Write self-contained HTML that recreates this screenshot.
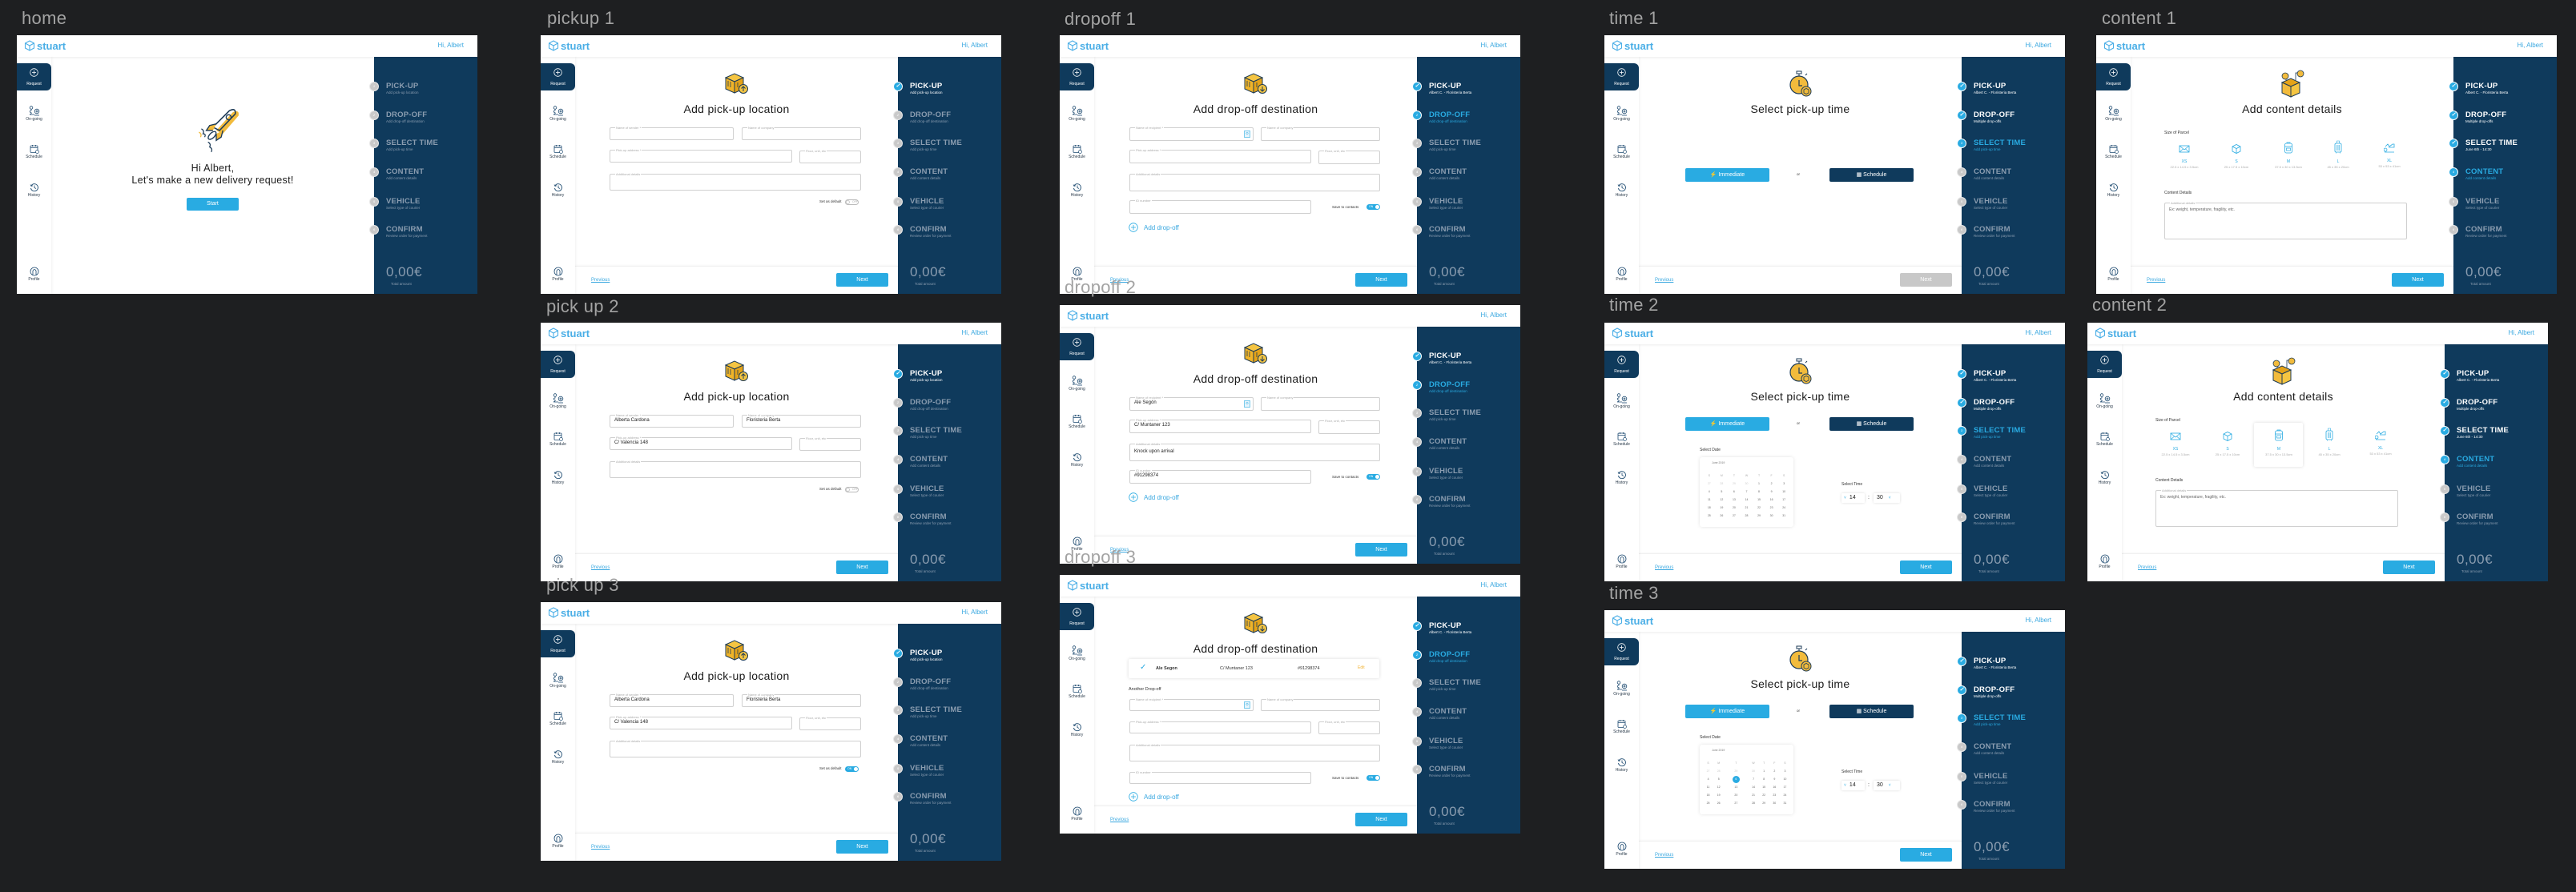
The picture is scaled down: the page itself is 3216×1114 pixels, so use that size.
<!DOCTYPE html>
<html><head><meta charset="utf-8">
<style>
*{margin:0;padding:0;box-sizing:border-box}
body{width:3216px;height:1114px;background:#1e1f21;position:relative;overflow:hidden;font-family:"Liberation Sans",sans-serif}
.lb{position:absolute;font-size:22px;color:#a3a3a3;z-index:5;line-height:22px;letter-spacing:.3px}
.ab{position:absolute;width:575px;height:323px;background:#fff;overflow:hidden}
.hd{position:absolute;left:0;top:0;width:575px;height:27px;background:#fff;box-shadow:0 1px 3px rgba(0,0,0,.08);z-index:2}
.logo{position:absolute;left:9px;top:6px;height:14px;display:flex;align-items:center;color:#4aaee6;font-weight:bold;font-size:13px}
.logo svg{margin-right:2px}
.hi{position:absolute;right:17px;top:8px;font-size:8px;color:#3aa8e0}
.nv{position:absolute;left:0;top:27px;width:43px;height:296px;background:#fff;box-shadow:1px 0 3px rgba(0,0,0,.06);z-index:1}
.rq{position:absolute;left:0;top:35px;width:43px;height:34px;background:#0f3a5c;border-radius:0 6px 6px 0;z-index:2}
.rq p{position:absolute;left:0;width:43px;top:23px;text-align:center;font-size:5px;color:#fff}
.rq svg{position:absolute;left:16px;top:6px}
.ni{position:absolute;left:0;width:43px;text-align:center;z-index:2}
.ni svg{display:block;margin:0 auto}
.ni p{font-size:5px;color:#2a3a4a;margin-top:1px}
.pn{position:absolute;left:446px;top:27px;width:129px;height:296px;background:#0f3a5c;z-index:1}
.s{position:absolute;left:0;width:129px;height:0}
.c{position:absolute;left:-6px;top:-6px;width:12px;height:12px;border-radius:50%;background:#c9c9c9;border:1px solid #e8e8e8;font-size:4px;color:#fff;text-align:center;line-height:10px}
.c.b{background:#29abe2;border-color:#fff}
.c.k{background:#29abe2;border-color:#fff;font-size:7px;font-weight:bold}
.t{position:absolute;left:15px;top:-6px;font-size:9.5px;font-weight:bold;color:#8b9db0;white-space:nowrap;letter-spacing:.2px}
.u{position:absolute;left:15px;top:5px;font-size:4.5px;color:#8b9db0;white-space:nowrap}
.w .t,.w .u{color:#fff}
.bl .t,.bl .u{color:#29abe2}
.tot{position:absolute;left:15px;top:259px;font-size:17px;color:#8b9db0;letter-spacing:.5px}
.ta{position:absolute;left:21px;top:281px;font-size:4.5px;color:#8b9db0}
.ft{position:absolute;left:43px;top:288px;width:403px;height:35px;border-top:1px solid #f0f0f0;box-shadow:0 -1px 2px rgba(0,0,0,.03)}
.pv{position:absolute;left:63px;top:303px;font-size:6px;color:#3aa8e0;text-decoration:underline}
.nx{position:absolute;left:369px;top:297px;width:65px;height:17px;background:#29abe2;border-radius:2px;color:#fff;font-size:7px;text-align:center;line-height:17px}
.nx.d{background:#c8c8c8}
.tt{position:absolute;left:43px;width:403px;text-align:center;font-size:14px;color:#1b1b1b;letter-spacing:.3px}
.ico{position:absolute}
.f{position:absolute;border:1px solid #d0d0d0;border-radius:2px}
.f em{position:absolute;left:6px;top:-3px;font-style:normal;font-size:4px;color:#aaa;background:#fff;padding:0 1px;line-height:5px;white-space:nowrap}
.f span{position:absolute;left:5px;top:3px;font-size:6px;color:#222;white-space:nowrap}
.sm{position:absolute;font-size:5px;color:#333;white-space:nowrap}
.tg{position:absolute;width:17px;height:7px;border-radius:4px;border:1px solid #bbb;background:#fff;font-size:3.5px;color:#aaa;line-height:5px;padding-left:8px}
.tg.on{background:#29abe2;border-color:#29abe2;color:#fff;padding-left:2px}
.tg.on::after{content:"";position:absolute;right:0;top:0;width:5px;height:5px;border-radius:50%;background:#fff}
.tg:not(.on)::after{content:"";position:absolute;left:0;top:0;width:5px;height:5px;border-radius:50%;background:#fff;border:1px solid #ccc;box-sizing:border-box}
.ad{position:absolute;font-size:8px;color:#3aa8e0;white-space:nowrap}
.btn{position:absolute;width:105px;height:17px;border-radius:2px;color:#fff;font-size:7px;line-height:17px;text-align:center}
.cal{position:absolute;left:119px;width:117px;height:87px;background:#fff;box-shadow:0 0 4px rgba(0,0,0,.12);border-radius:3px;font-size:3.5px;color:#777}
.cal table{position:absolute;left:4px;top:18px;width:109px;border-collapse:collapse}
.cal td{text-align:center;height:10px;font-size:3.5px;color:#666}
.cal tr.h td{color:#aaa}
.cal td.o{color:#ccc}
.cal td.sel span{display:inline-block;width:9px;height:9px;border-radius:50%;background:#29abe2;color:#fff;line-height:9px}
.sel2{position:absolute;height:12px;background:#fff;box-shadow:0 0 3px rgba(0,0,0,.15);border-radius:1px;font-size:7px;color:#222;line-height:12px}
.pi{position:absolute;text-align:center;width:50px}
.pi b{display:block;font-weight:normal;font-size:5px;color:#29abe2;margin-top:2px}
.pi i{display:block;font-style:normal;font-size:4px;color:#aaa;margin-top:1px;white-space:nowrap}
</style></head><body>

<div class="lb" style="left:27px;top:12px">home</div>
<div class="lb" style="left:683px;top:12px">pickup 1</div>
<div class="lb" style="left:682px;top:372px">pick up 2</div>
<div class="lb" style="left:682px;top:720px">pick up 3</div>
<div class="lb" style="left:1329px;top:13px">dropoff 1</div>
<div class="lb" style="left:1329px;top:348px">dropoff 2</div>
<div class="lb" style="left:1329px;top:685px">dropoff 3</div>
<div class="lb" style="left:2009px;top:12px">time 1</div>
<div class="lb" style="left:2009px;top:370px">time 2</div>
<div class="lb" style="left:2009px;top:730px">time 3</div>
<div class="lb" style="left:2624px;top:12px">content 1</div>
<div class="lb" style="left:2612px;top:370px">content 2</div>

<!-- HOME -->
<div class="ab" style="left:21px;top:44px">
<div class="hd"><div class="logo"><svg width="14" height="14" viewBox="0 0 14 14"><path d="M7 1L12.5 4V10L7 13L1.5 10V4Z M1.5 4L7 7L12.5 4 M7 7V13" fill="none" stroke="#4aaee6" stroke-width="1.1"/></svg>stuart</div><div class="hi">Hi, Albert</div></div>
<div class="nv"></div>
<div class="rq"><svg width="11" height="11" viewBox="0 0 11 11"><circle cx="5.5" cy="5.5" r="4.8" fill="none" stroke="#fff" stroke-width=".8"/><path d="M5.5 3V8M3 5.5H8" stroke="#fff" stroke-width=".8"/></svg><p>Request</p></div>
<div class="ni" style="top:88px"><svg width="16" height="13" viewBox="0 0 16 13"><circle cx="4" cy="2.5" r="1.8" fill="none" stroke="#1d4a70" stroke-width=".8"/><path d="M4 4.5V6Q1 6.5 3 8.5Q6 9 2 11H8" fill="none" stroke="#1d4a70" stroke-width=".8"/><circle cx="11" cy="7" r="2.8" fill="none" stroke="#1d4a70" stroke-width=".8"/><circle cx="11" cy="7" r="1" fill="none" stroke="#1d4a70" stroke-width=".7"/><path d="M8 12H14" stroke="#1d4a70" stroke-width=".8"/></svg><p>On-going</p></div>
<div class="ni" style="top:136px"><svg width="12" height="12" viewBox="0 0 12 12"><rect x="1" y="2" width="9" height="8.5" rx="1" fill="none" stroke="#1d4a70" stroke-width=".8"/><path d="M1 4.5H10M3.5 1V3M7.5 1V3" stroke="#1d4a70" stroke-width=".8"/><circle cx="9.5" cy="9.5" r="2" fill="#fff" stroke="#1d4a70" stroke-width=".7"/></svg><p>Schedule</p></div>
<div class="ni" style="top:184px"><svg width="12" height="12" viewBox="0 0 12 12"><path d="M2 4A4.5 4.5 0 1 1 1.5 7" fill="none" stroke="#1d4a70" stroke-width=".9"/><path d="M1 2.5L2 4.5L4 3.7M6 3.5V6.5L8 7.5" fill="none" stroke="#1d4a70" stroke-width=".8"/></svg><p>History</p></div>
<div class="ni" style="top:289px"><svg width="12" height="12" viewBox="0 0 12 12"><circle cx="6" cy="6" r="5" fill="none" stroke="#1d4a70" stroke-width=".8"/><path d="M4 10V7.5Q3.5 4 6 3.5Q8.5 4 8 7.5V10" fill="none" stroke="#1d4a70" stroke-width=".8"/></svg><p>Profile</p></div>
<div class="pn">
<div class="s" style="top:37px"><i class="c">1</i><b class="t">PICK-UP</b><span class="u">Add pick-up location</span></div>
<div class="s" style="top:73px"><i class="c">2</i><b class="t">DROP-OFF</b><span class="u">Add drop-off destination</span></div>
<div class="s" style="top:108px"><i class="c">3</i><b class="t">SELECT TIME</b><span class="u">Add pick-up time</span></div>
<div class="s" style="top:144px"><i class="c">4</i><b class="t">CONTENT</b><span class="u">Add content details</span></div>
<div class="s" style="top:181px"><i class="c">5</i><b class="t">VEHICLE</b><span class="u">Select type of courier</span></div>
<div class="s" style="top:216px"><i class="c">6</i><b class="t">CONFIRM</b><span class="u">Review order for payment</span></div>
<div class="tot">0,00€</div><div class="ta">Total amount</div>
</div>
<svg class="ico" style="left:218px;top:88px" width="64" height="64" viewBox="0 0 62 62"><path d="M30 30L50 8Q58 4 57 12L38 34Z" fill="#f2bb3c"/><path d="M26 26L46 6Q54 2 53 10L34 30Z" fill="none" stroke="#1d3b57" stroke-width="1.5"/><circle cx="45" cy="14" r="3" fill="none" stroke="#1d3b57" stroke-width="1.3"/><path d="M30 22L22 24L18 30L26 30M38 30L36 38L30 42L30 34" fill="#f2bb3c" stroke="#1d3b57" stroke-width="1.3"/><ellipse cx="25" cy="36" rx="6" ry="3" transform="rotate(-45 25 36)" fill="none" stroke="#1d3b57" stroke-width="1.3"/><path d="M12 28Q16 30 14 34Q18 34 16 38M20 44Q24 46 22 50Q26 52 24 56" fill="none" stroke="#1d3b57" stroke-width="1.2"/><path d="M9 32Q13 34 11 38" fill="none" stroke="#f2bb3c" stroke-width="1.2"/></svg>
<div class="tt" style="top:159px;font-size:12.5px;line-height:15px">Hi Albert,<br>Let's make a new delivery request!</div>
<div class="nx" style="left:212px;top:203px;width:65px;height:16px;line-height:16px">Start</div>
</div>

<!-- PICKUP 1 -->
<div class="ab" style="left:675px;top:44px">
<div class="hd"><div class="logo"><svg width="14" height="14" viewBox="0 0 14 14"><path d="M7 1L12.5 4V10L7 13L1.5 10V4Z M1.5 4L7 7L12.5 4 M7 7V13" fill="none" stroke="#4aaee6" stroke-width="1.1"/></svg>stuart</div><div class="hi">Hi, Albert</div></div>
<div class="nv"></div>
<div class="rq"><svg width="11" height="11" viewBox="0 0 11 11"><circle cx="5.5" cy="5.5" r="4.8" fill="none" stroke="#fff" stroke-width=".8"/><path d="M5.5 3V8M3 5.5H8" stroke="#fff" stroke-width=".8"/></svg><p>Request</p></div>
<div class="ni" style="top:88px"><svg width="16" height="13" viewBox="0 0 16 13"><circle cx="4" cy="2.5" r="1.8" fill="none" stroke="#1d4a70" stroke-width=".8"/><path d="M4 4.5V6Q1 6.5 3 8.5Q6 9 2 11H8" fill="none" stroke="#1d4a70" stroke-width=".8"/><circle cx="11" cy="7" r="2.8" fill="none" stroke="#1d4a70" stroke-width=".8"/><circle cx="11" cy="7" r="1" fill="none" stroke="#1d4a70" stroke-width=".7"/><path d="M8 12H14" stroke="#1d4a70" stroke-width=".8"/></svg><p>On-going</p></div>
<div class="ni" style="top:136px"><svg width="12" height="12" viewBox="0 0 12 12"><rect x="1" y="2" width="9" height="8.5" rx="1" fill="none" stroke="#1d4a70" stroke-width=".8"/><path d="M1 4.5H10M3.5 1V3M7.5 1V3" stroke="#1d4a70" stroke-width=".8"/><circle cx="9.5" cy="9.5" r="2" fill="#fff" stroke="#1d4a70" stroke-width=".7"/></svg><p>Schedule</p></div>
<div class="ni" style="top:184px"><svg width="12" height="12" viewBox="0 0 12 12"><path d="M2 4A4.5 4.5 0 1 1 1.5 7" fill="none" stroke="#1d4a70" stroke-width=".9"/><path d="M1 2.5L2 4.5L4 3.7M6 3.5V6.5L8 7.5" fill="none" stroke="#1d4a70" stroke-width=".8"/></svg><p>History</p></div>
<div class="ni" style="top:289px"><svg width="12" height="12" viewBox="0 0 12 12"><circle cx="6" cy="6" r="5" fill="none" stroke="#1d4a70" stroke-width=".8"/><path d="M4 10V7.5Q3.5 4 6 3.5Q8.5 4 8 7.5V10" fill="none" stroke="#1d4a70" stroke-width=".8"/></svg><p>Profile</p></div>
<div class="pn">
<div class="s w" style="top:37px"><i class="c k">✓</i><b class="t">PICK-UP</b><span class="u">Add pick-up location</span></div>
<div class="s" style="top:73px"><i class="c">2</i><b class="t">DROP-OFF</b><span class="u">Add drop-off destination</span></div>
<div class="s" style="top:108px"><i class="c">3</i><b class="t">SELECT TIME</b><span class="u">Add pick-up time</span></div>
<div class="s" style="top:144px"><i class="c">4</i><b class="t">CONTENT</b><span class="u">Add content details</span></div>
<div class="s" style="top:181px"><i class="c">5</i><b class="t">VEHICLE</b><span class="u">Select type of courier</span></div>
<div class="s" style="top:216px"><i class="c">6</i><b class="t">CONFIRM</b><span class="u">Review order for payment</span></div>
<div class="tot">0,00€</div><div class="ta">Total amount</div>
</div>
<svg class="ico" style="left:228px;top:45px" width="32" height="30" viewBox="0 0 32 30"><path d="M3 8L14 3L25 8L14 13Z" fill="#f5c542" stroke="#1d3b57" stroke-width="1"/><path d="M3 8L14 13V27L3 22Z" fill="#f0b429" stroke="#1d3b57" stroke-width="1"/><path d="M14 13L25 8V22L14 27Z" fill="#e5a318" stroke="#1d3b57" stroke-width="1"/><path d="M6 12V19M9 13V20M18 14V20" stroke="#1d3b57" stroke-width=".8"/><circle cx="25" cy="22" r="5.5" fill="#f5c542" stroke="#1d3b57" stroke-width="1"/><path d="M25 25V19M22.5 21.5L25 19L27.5 21.5" fill="none" stroke="#1d3b57" stroke-width="1"/></svg>
<div class="tt" style="top:84px">Add pick-up location</div>
<div class="f" style="left:86px;top:115px;width:155px;height:16px"><em>Name of sender *</em></div>
<div class="f" style="left:251px;top:115px;width:149px;height:16px"><em>Name of company</em></div>
<div class="f" style="left:86px;top:143px;width:228px;height:16px"><em>Pick-up address *</em></div>
<div class="f" style="left:323px;top:144px;width:77px;height:16px"><em>Floor, unit, etc</em></div>
<div class="f" style="left:86px;top:173px;width:314px;height:21px"><em>Additional details</em></div>
<div class="sm" style="left:348px;top:205px;font-size:4.5px">Set as default</div><div class="tg" style="left:380px;top:205px">OFF</div>
<div class="ft"></div><div class="pv">Previous</div><div class="nx">Next</div>
</div>

<!-- PICKUP 2 -->
<div class="ab" style="left:675px;top:403px">
<div class="hd"><div class="logo"><svg width="14" height="14" viewBox="0 0 14 14"><path d="M7 1L12.5 4V10L7 13L1.5 10V4Z M1.5 4L7 7L12.5 4 M7 7V13" fill="none" stroke="#4aaee6" stroke-width="1.1"/></svg>stuart</div><div class="hi">Hi, Albert</div></div>
<div class="nv"></div>
<div class="rq"><svg width="11" height="11" viewBox="0 0 11 11"><circle cx="5.5" cy="5.5" r="4.8" fill="none" stroke="#fff" stroke-width=".8"/><path d="M5.5 3V8M3 5.5H8" stroke="#fff" stroke-width=".8"/></svg><p>Request</p></div>
<div class="ni" style="top:88px"><svg width="16" height="13" viewBox="0 0 16 13"><circle cx="4" cy="2.5" r="1.8" fill="none" stroke="#1d4a70" stroke-width=".8"/><path d="M4 4.5V6Q1 6.5 3 8.5Q6 9 2 11H8" fill="none" stroke="#1d4a70" stroke-width=".8"/><circle cx="11" cy="7" r="2.8" fill="none" stroke="#1d4a70" stroke-width=".8"/><circle cx="11" cy="7" r="1" fill="none" stroke="#1d4a70" stroke-width=".7"/><path d="M8 12H14" stroke="#1d4a70" stroke-width=".8"/></svg><p>On-going</p></div>
<div class="ni" style="top:136px"><svg width="12" height="12" viewBox="0 0 12 12"><rect x="1" y="2" width="9" height="8.5" rx="1" fill="none" stroke="#1d4a70" stroke-width=".8"/><path d="M1 4.5H10M3.5 1V3M7.5 1V3" stroke="#1d4a70" stroke-width=".8"/><circle cx="9.5" cy="9.5" r="2" fill="#fff" stroke="#1d4a70" stroke-width=".7"/></svg><p>Schedule</p></div>
<div class="ni" style="top:184px"><svg width="12" height="12" viewBox="0 0 12 12"><path d="M2 4A4.5 4.5 0 1 1 1.5 7" fill="none" stroke="#1d4a70" stroke-width=".9"/><path d="M1 2.5L2 4.5L4 3.7M6 3.5V6.5L8 7.5" fill="none" stroke="#1d4a70" stroke-width=".8"/></svg><p>History</p></div>
<div class="ni" style="top:289px"><svg width="12" height="12" viewBox="0 0 12 12"><circle cx="6" cy="6" r="5" fill="none" stroke="#1d4a70" stroke-width=".8"/><path d="M4 10V7.5Q3.5 4 6 3.5Q8.5 4 8 7.5V10" fill="none" stroke="#1d4a70" stroke-width=".8"/></svg><p>Profile</p></div>
<div class="pn">
<div class="s w" style="top:37px"><i class="c k">✓</i><b class="t">PICK-UP</b><span class="u">Add pick-up location</span></div>
<div class="s" style="top:73px"><i class="c">2</i><b class="t">DROP-OFF</b><span class="u">Add drop-off destination</span></div>
<div class="s" style="top:108px"><i class="c">3</i><b class="t">SELECT TIME</b><span class="u">Add pick-up time</span></div>
<div class="s" style="top:144px"><i class="c">4</i><b class="t">CONTENT</b><span class="u">Add content details</span></div>
<div class="s" style="top:181px"><i class="c">5</i><b class="t">VEHICLE</b><span class="u">Select type of courier</span></div>
<div class="s" style="top:216px"><i class="c">6</i><b class="t">CONFIRM</b><span class="u">Review order for payment</span></div>
<div class="tot">0,00€</div><div class="ta">Total amount</div>
</div>
<svg class="ico" style="left:228px;top:45px" width="32" height="30" viewBox="0 0 32 30"><path d="M3 8L14 3L25 8L14 13Z" fill="#f5c542" stroke="#1d3b57" stroke-width="1"/><path d="M3 8L14 13V27L3 22Z" fill="#f0b429" stroke="#1d3b57" stroke-width="1"/><path d="M14 13L25 8V22L14 27Z" fill="#e5a318" stroke="#1d3b57" stroke-width="1"/><path d="M6 12V19M9 13V20M18 14V20" stroke="#1d3b57" stroke-width=".8"/><circle cx="25" cy="22" r="5.5" fill="#f5c542" stroke="#1d3b57" stroke-width="1"/><path d="M25 25V19M22.5 21.5L25 19L27.5 21.5" fill="none" stroke="#1d3b57" stroke-width="1"/></svg>
<div class="tt" style="top:84px">Add pick-up location</div>
<div class="f" style="left:86px;top:115px;width:155px;height:16px"><em>Name of sender *</em><span>Alberta Cardona</span></div>
<div class="f" style="left:251px;top:115px;width:149px;height:16px"><em>Name of company</em><span>Floristeria Berta</span></div>
<div class="f" style="left:86px;top:143px;width:228px;height:16px"><em>Pick-up address *</em><span>C/ Valencia 148</span></div>
<div class="f" style="left:323px;top:144px;width:77px;height:16px"><em>Floor, unit, etc</em></div>
<div class="f" style="left:86px;top:173px;width:314px;height:21px"><em>Additional details</em></div>
<div class="sm" style="left:348px;top:205px;font-size:4.5px">Set as default</div><div class="tg" style="left:380px;top:205px">OFF</div>
<div class="ft"></div><div class="pv">Previous</div><div class="nx">Next</div>
</div>

<!-- PICKUP 3 -->
<div class="ab" style="left:675px;top:752px">
<div class="hd"><div class="logo"><svg width="14" height="14" viewBox="0 0 14 14"><path d="M7 1L12.5 4V10L7 13L1.5 10V4Z M1.5 4L7 7L12.5 4 M7 7V13" fill="none" stroke="#4aaee6" stroke-width="1.1"/></svg>stuart</div><div class="hi">Hi, Albert</div></div>
<div class="nv"></div>
<div class="rq"><svg width="11" height="11" viewBox="0 0 11 11"><circle cx="5.5" cy="5.5" r="4.8" fill="none" stroke="#fff" stroke-width=".8"/><path d="M5.5 3V8M3 5.5H8" stroke="#fff" stroke-width=".8"/></svg><p>Request</p></div>
<div class="ni" style="top:88px"><svg width="16" height="13" viewBox="0 0 16 13"><circle cx="4" cy="2.5" r="1.8" fill="none" stroke="#1d4a70" stroke-width=".8"/><path d="M4 4.5V6Q1 6.5 3 8.5Q6 9 2 11H8" fill="none" stroke="#1d4a70" stroke-width=".8"/><circle cx="11" cy="7" r="2.8" fill="none" stroke="#1d4a70" stroke-width=".8"/><circle cx="11" cy="7" r="1" fill="none" stroke="#1d4a70" stroke-width=".7"/><path d="M8 12H14" stroke="#1d4a70" stroke-width=".8"/></svg><p>On-going</p></div>
<div class="ni" style="top:136px"><svg width="12" height="12" viewBox="0 0 12 12"><rect x="1" y="2" width="9" height="8.5" rx="1" fill="none" stroke="#1d4a70" stroke-width=".8"/><path d="M1 4.5H10M3.5 1V3M7.5 1V3" stroke="#1d4a70" stroke-width=".8"/><circle cx="9.5" cy="9.5" r="2" fill="#fff" stroke="#1d4a70" stroke-width=".7"/></svg><p>Schedule</p></div>
<div class="ni" style="top:184px"><svg width="12" height="12" viewBox="0 0 12 12"><path d="M2 4A4.5 4.5 0 1 1 1.5 7" fill="none" stroke="#1d4a70" stroke-width=".9"/><path d="M1 2.5L2 4.5L4 3.7M6 3.5V6.5L8 7.5" fill="none" stroke="#1d4a70" stroke-width=".8"/></svg><p>History</p></div>
<div class="ni" style="top:289px"><svg width="12" height="12" viewBox="0 0 12 12"><circle cx="6" cy="6" r="5" fill="none" stroke="#1d4a70" stroke-width=".8"/><path d="M4 10V7.5Q3.5 4 6 3.5Q8.5 4 8 7.5V10" fill="none" stroke="#1d4a70" stroke-width=".8"/></svg><p>Profile</p></div>
<div class="pn">
<div class="s w" style="top:37px"><i class="c k">✓</i><b class="t">PICK-UP</b><span class="u">Add pick-up location</span></div>
<div class="s" style="top:73px"><i class="c">2</i><b class="t">DROP-OFF</b><span class="u">Add drop-off destination</span></div>
<div class="s" style="top:108px"><i class="c">3</i><b class="t">SELECT TIME</b><span class="u">Add pick-up time</span></div>
<div class="s" style="top:144px"><i class="c">4</i><b class="t">CONTENT</b><span class="u">Add content details</span></div>
<div class="s" style="top:181px"><i class="c">5</i><b class="t">VEHICLE</b><span class="u">Select type of courier</span></div>
<div class="s" style="top:216px"><i class="c">6</i><b class="t">CONFIRM</b><span class="u">Review order for payment</span></div>
<div class="tot">0,00€</div><div class="ta">Total amount</div>
</div>
<svg class="ico" style="left:228px;top:45px" width="32" height="30" viewBox="0 0 32 30"><path d="M3 8L14 3L25 8L14 13Z" fill="#f5c542" stroke="#1d3b57" stroke-width="1"/><path d="M3 8L14 13V27L3 22Z" fill="#f0b429" stroke="#1d3b57" stroke-width="1"/><path d="M14 13L25 8V22L14 27Z" fill="#e5a318" stroke="#1d3b57" stroke-width="1"/><path d="M6 12V19M9 13V20M18 14V20" stroke="#1d3b57" stroke-width=".8"/><circle cx="25" cy="22" r="5.5" fill="#f5c542" stroke="#1d3b57" stroke-width="1"/><path d="M25 25V19M22.5 21.5L25 19L27.5 21.5" fill="none" stroke="#1d3b57" stroke-width="1"/></svg>
<div class="tt" style="top:84px">Add pick-up location</div>
<div class="f" style="left:86px;top:115px;width:155px;height:16px"><em>Name of sender *</em><span>Alberta Cardona</span></div>
<div class="f" style="left:251px;top:115px;width:149px;height:16px"><em>Name of company</em><span>Floristeria Berta</span></div>
<div class="f" style="left:86px;top:143px;width:228px;height:16px"><em>Pick-up address *</em><span>C/ Valencia 148</span></div>
<div class="f" style="left:323px;top:144px;width:77px;height:16px"><em>Floor, unit, etc</em></div>
<div class="f" style="left:86px;top:173px;width:314px;height:21px"><em>Additional details</em></div>
<div class="sm" style="left:348px;top:205px;font-size:4.5px">Set as default</div><div class="tg on" style="left:380px;top:205px">ON</div>
<div class="ft"></div><div class="pv">Previous</div><div class="nx">Next</div>
</div>

<!-- DROPOFF 1 -->
<div class="ab" style="left:1323px;top:44px">
<div class="hd"><div class="logo"><svg width="14" height="14" viewBox="0 0 14 14"><path d="M7 1L12.5 4V10L7 13L1.5 10V4Z M1.5 4L7 7L12.5 4 M7 7V13" fill="none" stroke="#4aaee6" stroke-width="1.1"/></svg>stuart</div><div class="hi">Hi, Albert</div></div>
<div class="nv"></div>
<div class="rq"><svg width="11" height="11" viewBox="0 0 11 11"><circle cx="5.5" cy="5.5" r="4.8" fill="none" stroke="#fff" stroke-width=".8"/><path d="M5.5 3V8M3 5.5H8" stroke="#fff" stroke-width=".8"/></svg><p>Request</p></div>
<div class="ni" style="top:88px"><svg width="16" height="13" viewBox="0 0 16 13"><circle cx="4" cy="2.5" r="1.8" fill="none" stroke="#1d4a70" stroke-width=".8"/><path d="M4 4.5V6Q1 6.5 3 8.5Q6 9 2 11H8" fill="none" stroke="#1d4a70" stroke-width=".8"/><circle cx="11" cy="7" r="2.8" fill="none" stroke="#1d4a70" stroke-width=".8"/><circle cx="11" cy="7" r="1" fill="none" stroke="#1d4a70" stroke-width=".7"/><path d="M8 12H14" stroke="#1d4a70" stroke-width=".8"/></svg><p>On-going</p></div>
<div class="ni" style="top:136px"><svg width="12" height="12" viewBox="0 0 12 12"><rect x="1" y="2" width="9" height="8.5" rx="1" fill="none" stroke="#1d4a70" stroke-width=".8"/><path d="M1 4.5H10M3.5 1V3M7.5 1V3" stroke="#1d4a70" stroke-width=".8"/><circle cx="9.5" cy="9.5" r="2" fill="#fff" stroke="#1d4a70" stroke-width=".7"/></svg><p>Schedule</p></div>
<div class="ni" style="top:184px"><svg width="12" height="12" viewBox="0 0 12 12"><path d="M2 4A4.5 4.5 0 1 1 1.5 7" fill="none" stroke="#1d4a70" stroke-width=".9"/><path d="M1 2.5L2 4.5L4 3.7M6 3.5V6.5L8 7.5" fill="none" stroke="#1d4a70" stroke-width=".8"/></svg><p>History</p></div>
<div class="ni" style="top:289px"><svg width="12" height="12" viewBox="0 0 12 12"><circle cx="6" cy="6" r="5" fill="none" stroke="#1d4a70" stroke-width=".8"/><path d="M4 10V7.5Q3.5 4 6 3.5Q8.5 4 8 7.5V10" fill="none" stroke="#1d4a70" stroke-width=".8"/></svg><p>Profile</p></div>
<div class="pn">
<div class="s w" style="top:37px"><i class="c k">✓</i><b class="t">PICK-UP</b><span class="u">Albert C. - Floristeria Berta</span></div>
<div class="s bl" style="top:73px"><i class="c b">2</i><b class="t">DROP-OFF</b><span class="u">Add drop-off destination</span></div>
<div class="s" style="top:108px"><i class="c">3</i><b class="t">SELECT TIME</b><span class="u">Add pick-up time</span></div>
<div class="s" style="top:144px"><i class="c">4</i><b class="t">CONTENT</b><span class="u">Add content details</span></div>
<div class="s" style="top:181px"><i class="c">5</i><b class="t">VEHICLE</b><span class="u">Select type of courier</span></div>
<div class="s" style="top:216px"><i class="c">6</i><b class="t">CONFIRM</b><span class="u">Review order for payment</span></div>
<div class="tot">0,00€</div><div class="ta">Total amount</div>
</div>
<svg class="ico" style="left:228px;top:45px" width="32" height="30" viewBox="0 0 32 30"><path d="M3 8L14 3L25 8L14 13Z" fill="#f5c542" stroke="#1d3b57" stroke-width="1"/><path d="M3 8L14 13V27L3 22Z" fill="#f0b429" stroke="#1d3b57" stroke-width="1"/><path d="M14 13L25 8V22L14 27Z" fill="#e5a318" stroke="#1d3b57" stroke-width="1"/><path d="M6 12V19M9 13V20M18 14V20" stroke="#1d3b57" stroke-width=".8"/><circle cx="25" cy="22" r="5.5" fill="#f5c542" stroke="#1d3b57" stroke-width="1"/><path d="M25 19V25M22.5 22.5L25 25L27.5 22.5" fill="none" stroke="#1d3b57" stroke-width="1"/></svg>
<div class="tt" style="top:84px">Add drop-off destination</div>
<div class="f" style="left:87px;top:115px;width:155px;height:17px"><em>Name of recipient *</em><svg style="position:absolute;right:3px;top:3px" width="8" height="9" viewBox="0 0 8 9"><rect x=".5" y=".5" width="7" height="8" fill="#e6f4fc" stroke="#29abe2" stroke-width=".6"/><circle cx="4" cy="3.5" r="1.2" fill="none" stroke="#29abe2" stroke-width=".5"/></svg></div>
<div class="f" style="left:251px;top:115px;width:149px;height:17px"><em>Name of company</em></div>
<div class="f" style="left:87px;top:143px;width:227px;height:17px"><em>Pick-up address *</em></div>
<div class="f" style="left:323px;top:144px;width:77px;height:17px"><em>Floor, unit, etc</em></div>
<div class="f" style="left:87px;top:173px;width:313px;height:22px"><em>Additional details</em></div>
<div class="f" style="left:87px;top:206px;width:227px;height:17px"><em>ID number</em></div>
<div class="sm" style="left:340px;top:212px;font-size:4.5px">Save to contacts</div><div class="tg on" style="left:383px;top:211px">ON</div>
<svg class="ico" style="left:86px;top:234px" width="12" height="12" viewBox="0 0 12 12"><circle cx="6" cy="6" r="5.3" fill="none" stroke="#29abe2" stroke-width=".8"/><path d="M6 3V9M3 6H9" stroke="#29abe2" stroke-width=".8"/></svg>
<div class="ad" style="left:105px;top:236px">Add drop-off</div>
<div class="ft"></div><div class="pv">Previous</div><div class="nx">Next</div>
</div>

<!-- DROPOFF 2 -->
<div class="ab" style="left:1323px;top:381px">
<div class="hd"><div class="logo"><svg width="14" height="14" viewBox="0 0 14 14"><path d="M7 1L12.5 4V10L7 13L1.5 10V4Z M1.5 4L7 7L12.5 4 M7 7V13" fill="none" stroke="#4aaee6" stroke-width="1.1"/></svg>stuart</div><div class="hi">Hi, Albert</div></div>
<div class="nv"></div>
<div class="rq"><svg width="11" height="11" viewBox="0 0 11 11"><circle cx="5.5" cy="5.5" r="4.8" fill="none" stroke="#fff" stroke-width=".8"/><path d="M5.5 3V8M3 5.5H8" stroke="#fff" stroke-width=".8"/></svg><p>Request</p></div>
<div class="ni" style="top:88px"><svg width="16" height="13" viewBox="0 0 16 13"><circle cx="4" cy="2.5" r="1.8" fill="none" stroke="#1d4a70" stroke-width=".8"/><path d="M4 4.5V6Q1 6.5 3 8.5Q6 9 2 11H8" fill="none" stroke="#1d4a70" stroke-width=".8"/><circle cx="11" cy="7" r="2.8" fill="none" stroke="#1d4a70" stroke-width=".8"/><circle cx="11" cy="7" r="1" fill="none" stroke="#1d4a70" stroke-width=".7"/><path d="M8 12H14" stroke="#1d4a70" stroke-width=".8"/></svg><p>On-going</p></div>
<div class="ni" style="top:136px"><svg width="12" height="12" viewBox="0 0 12 12"><rect x="1" y="2" width="9" height="8.5" rx="1" fill="none" stroke="#1d4a70" stroke-width=".8"/><path d="M1 4.5H10M3.5 1V3M7.5 1V3" stroke="#1d4a70" stroke-width=".8"/><circle cx="9.5" cy="9.5" r="2" fill="#fff" stroke="#1d4a70" stroke-width=".7"/></svg><p>Schedule</p></div>
<div class="ni" style="top:184px"><svg width="12" height="12" viewBox="0 0 12 12"><path d="M2 4A4.5 4.5 0 1 1 1.5 7" fill="none" stroke="#1d4a70" stroke-width=".9"/><path d="M1 2.5L2 4.5L4 3.7M6 3.5V6.5L8 7.5" fill="none" stroke="#1d4a70" stroke-width=".8"/></svg><p>History</p></div>
<div class="ni" style="top:289px"><svg width="12" height="12" viewBox="0 0 12 12"><circle cx="6" cy="6" r="5" fill="none" stroke="#1d4a70" stroke-width=".8"/><path d="M4 10V7.5Q3.5 4 6 3.5Q8.5 4 8 7.5V10" fill="none" stroke="#1d4a70" stroke-width=".8"/></svg><p>Profile</p></div>
<div class="pn">
<div class="s w" style="top:37px"><i class="c k">✓</i><b class="t">PICK-UP</b><span class="u">Albert C. - Floristeria Berta</span></div>
<div class="s bl" style="top:73px"><i class="c b">2</i><b class="t">DROP-OFF</b><span class="u">Add drop-off destination</span></div>
<div class="s" style="top:108px"><i class="c">3</i><b class="t">SELECT TIME</b><span class="u">Add pick-up time</span></div>
<div class="s" style="top:144px"><i class="c">4</i><b class="t">CONTENT</b><span class="u">Add content details</span></div>
<div class="s" style="top:181px"><i class="c">5</i><b class="t">VEHICLE</b><span class="u">Select type of courier</span></div>
<div class="s" style="top:216px"><i class="c">6</i><b class="t">CONFIRM</b><span class="u">Review order for payment</span></div>
<div class="tot">0,00€</div><div class="ta">Total amount</div>
</div>
<svg class="ico" style="left:228px;top:45px" width="32" height="30" viewBox="0 0 32 30"><path d="M3 8L14 3L25 8L14 13Z" fill="#f5c542" stroke="#1d3b57" stroke-width="1"/><path d="M3 8L14 13V27L3 22Z" fill="#f0b429" stroke="#1d3b57" stroke-width="1"/><path d="M14 13L25 8V22L14 27Z" fill="#e5a318" stroke="#1d3b57" stroke-width="1"/><path d="M6 12V19M9 13V20M18 14V20" stroke="#1d3b57" stroke-width=".8"/><circle cx="25" cy="22" r="5.5" fill="#f5c542" stroke="#1d3b57" stroke-width="1"/><path d="M25 19V25M22.5 22.5L25 25L27.5 22.5" fill="none" stroke="#1d3b57" stroke-width="1"/></svg>
<div class="tt" style="top:84px">Add drop-off destination</div>
<div class="f" style="left:87px;top:115px;width:155px;height:17px"><em>Name of recipient *</em><span>Ale Segón</span><svg style="position:absolute;right:3px;top:3px" width="8" height="9" viewBox="0 0 8 9"><rect x=".5" y=".5" width="7" height="8" fill="#e6f4fc" stroke="#29abe2" stroke-width=".6"/><circle cx="4" cy="3.5" r="1.2" fill="none" stroke="#29abe2" stroke-width=".5"/></svg></div>
<div class="f" style="left:251px;top:115px;width:149px;height:17px"><em>Name of company</em></div>
<div class="f" style="left:87px;top:143px;width:227px;height:17px"><em>Pick-up address *</em><span>C/ Muntaner 123</span></div>
<div class="f" style="left:323px;top:144px;width:77px;height:17px"><em>Floor, unit, etc</em></div>
<div class="f" style="left:87px;top:173px;width:313px;height:22px"><em>Additional details</em><span style="top:6px">Knock upon arrival</span></div>
<div class="f" style="left:87px;top:206px;width:227px;height:17px"><em>ID number</em><span>#91298374</span></div>
<div class="sm" style="left:340px;top:212px;font-size:4.5px">Save to contacts</div><div class="tg on" style="left:383px;top:211px">ON</div>
<svg class="ico" style="left:86px;top:234px" width="12" height="12" viewBox="0 0 12 12"><circle cx="6" cy="6" r="5.3" fill="none" stroke="#29abe2" stroke-width=".8"/><path d="M6 3V9M3 6H9" stroke="#29abe2" stroke-width=".8"/></svg>
<div class="ad" style="left:105px;top:236px">Add drop-off</div>
<div class="ft"></div><div class="pv">Previous</div><div class="nx">Next</div>
</div>

<!-- DROPOFF 3 -->
<div class="ab" style="left:1323px;top:718px">
<div class="hd"><div class="logo"><svg width="14" height="14" viewBox="0 0 14 14"><path d="M7 1L12.5 4V10L7 13L1.5 10V4Z M1.5 4L7 7L12.5 4 M7 7V13" fill="none" stroke="#4aaee6" stroke-width="1.1"/></svg>stuart</div><div class="hi">Hi, Albert</div></div>
<div class="nv"></div>
<div class="rq"><svg width="11" height="11" viewBox="0 0 11 11"><circle cx="5.5" cy="5.5" r="4.8" fill="none" stroke="#fff" stroke-width=".8"/><path d="M5.5 3V8M3 5.5H8" stroke="#fff" stroke-width=".8"/></svg><p>Request</p></div>
<div class="ni" style="top:88px"><svg width="16" height="13" viewBox="0 0 16 13"><circle cx="4" cy="2.5" r="1.8" fill="none" stroke="#1d4a70" stroke-width=".8"/><path d="M4 4.5V6Q1 6.5 3 8.5Q6 9 2 11H8" fill="none" stroke="#1d4a70" stroke-width=".8"/><circle cx="11" cy="7" r="2.8" fill="none" stroke="#1d4a70" stroke-width=".8"/><circle cx="11" cy="7" r="1" fill="none" stroke="#1d4a70" stroke-width=".7"/><path d="M8 12H14" stroke="#1d4a70" stroke-width=".8"/></svg><p>On-going</p></div>
<div class="ni" style="top:136px"><svg width="12" height="12" viewBox="0 0 12 12"><rect x="1" y="2" width="9" height="8.5" rx="1" fill="none" stroke="#1d4a70" stroke-width=".8"/><path d="M1 4.5H10M3.5 1V3M7.5 1V3" stroke="#1d4a70" stroke-width=".8"/><circle cx="9.5" cy="9.5" r="2" fill="#fff" stroke="#1d4a70" stroke-width=".7"/></svg><p>Schedule</p></div>
<div class="ni" style="top:184px"><svg width="12" height="12" viewBox="0 0 12 12"><path d="M2 4A4.5 4.5 0 1 1 1.5 7" fill="none" stroke="#1d4a70" stroke-width=".9"/><path d="M1 2.5L2 4.5L4 3.7M6 3.5V6.5L8 7.5" fill="none" stroke="#1d4a70" stroke-width=".8"/></svg><p>History</p></div>
<div class="ni" style="top:289px"><svg width="12" height="12" viewBox="0 0 12 12"><circle cx="6" cy="6" r="5" fill="none" stroke="#1d4a70" stroke-width=".8"/><path d="M4 10V7.5Q3.5 4 6 3.5Q8.5 4 8 7.5V10" fill="none" stroke="#1d4a70" stroke-width=".8"/></svg><p>Profile</p></div>
<div class="pn">
<div class="s w" style="top:37px"><i class="c k">✓</i><b class="t">PICK-UP</b><span class="u">Albert C. - Floristeria Berta</span></div>
<div class="s bl" style="top:73px"><i class="c b">2</i><b class="t">DROP-OFF</b><span class="u">Add drop-off destination</span></div>
<div class="s" style="top:108px"><i class="c">3</i><b class="t">SELECT TIME</b><span class="u">Add pick-up time</span></div>
<div class="s" style="top:144px"><i class="c">4</i><b class="t">CONTENT</b><span class="u">Add content details</span></div>
<div class="s" style="top:181px"><i class="c">5</i><b class="t">VEHICLE</b><span class="u">Select type of courier</span></div>
<div class="s" style="top:216px"><i class="c">6</i><b class="t">CONFIRM</b><span class="u">Review order for payment</span></div>
<div class="tot">0,00€</div><div class="ta">Total amount</div>
</div>
<svg class="ico" style="left:228px;top:45px" width="32" height="30" viewBox="0 0 32 30"><path d="M3 8L14 3L25 8L14 13Z" fill="#f5c542" stroke="#1d3b57" stroke-width="1"/><path d="M3 8L14 13V27L3 22Z" fill="#f0b429" stroke="#1d3b57" stroke-width="1"/><path d="M14 13L25 8V22L14 27Z" fill="#e5a318" stroke="#1d3b57" stroke-width="1"/><path d="M6 12V19M9 13V20M18 14V20" stroke="#1d3b57" stroke-width=".8"/><circle cx="25" cy="22" r="5.5" fill="#f5c542" stroke="#1d3b57" stroke-width="1"/><path d="M25 19V25M22.5 22.5L25 25L27.5 22.5" fill="none" stroke="#1d3b57" stroke-width="1"/></svg>
<div class="tt" style="top:84px">Add drop-off destination</div>
<div style="position:absolute;left:86px;top:105px;width:313px;height:24px;background:#fff;box-shadow:0 0 4px rgba(0,0,0,.15);border-radius:2px">
<span style="position:absolute;left:14px;top:5px;color:#29abe2;font-size:10px">✓</span>
<span class="sm" style="left:34px;top:9px;font-size:5.5px;font-weight:bold">Ale Segon</span>
<span class="sm" style="left:114px;top:9px;font-size:5.5px">C/ Muntaner 123</span>
<span class="sm" style="left:211px;top:9px;font-size:5.5px">#91298374</span>
<span class="sm" style="left:286px;top:8px;font-size:5px;color:#f2b233">Edit</span></div>
<div class="sm" style="left:86px;top:140px;font-size:5.5px">Another Drop-off</div>
<div class="f" style="left:87px;top:155px;width:155px;height:15px"><em>Name of recipient *</em><svg style="position:absolute;right:3px;top:2px" width="8" height="9" viewBox="0 0 8 9"><rect x=".5" y=".5" width="7" height="8" fill="#e6f4fc" stroke="#29abe2" stroke-width=".6"/><circle cx="4" cy="3.5" r="1.2" fill="none" stroke="#29abe2" stroke-width=".5"/></svg></div>
<div class="f" style="left:251px;top:155px;width:149px;height:15px"><em>Name of company</em></div>
<div class="f" style="left:87px;top:183px;width:227px;height:15px"><em>Pick-up address *</em></div>
<div class="f" style="left:323px;top:183px;width:77px;height:16px"><em>Floor, unit, etc</em></div>
<div class="f" style="left:87px;top:212px;width:313px;height:21px"><em>Additional details</em></div>
<div class="f" style="left:87px;top:246px;width:227px;height:15px"><em>ID number</em></div>
<div class="sm" style="left:340px;top:251px;font-size:4.5px">Save to contacts</div><div class="tg on" style="left:383px;top:250px">ON</div>
<svg class="ico" style="left:86px;top:271px" width="12" height="12" viewBox="0 0 12 12"><circle cx="6" cy="6" r="5.3" fill="none" stroke="#29abe2" stroke-width=".8"/><path d="M6 3V9M3 6H9" stroke="#29abe2" stroke-width=".8"/></svg>
<div class="ad" style="left:105px;top:273px">Add drop-off</div>
<div class="ft"></div><div class="pv">Previous</div><div class="nx">Next</div>
</div>

<!-- TIME 1 -->
<div class="ab" style="left:2003px;top:44px">
<div class="hd"><div class="logo"><svg width="14" height="14" viewBox="0 0 14 14"><path d="M7 1L12.5 4V10L7 13L1.5 10V4Z M1.5 4L7 7L12.5 4 M7 7V13" fill="none" stroke="#4aaee6" stroke-width="1.1"/></svg>stuart</div><div class="hi">Hi, Albert</div></div>
<div class="nv"></div>
<div class="rq"><svg width="11" height="11" viewBox="0 0 11 11"><circle cx="5.5" cy="5.5" r="4.8" fill="none" stroke="#fff" stroke-width=".8"/><path d="M5.5 3V8M3 5.5H8" stroke="#fff" stroke-width=".8"/></svg><p>Request</p></div>
<div class="ni" style="top:88px"><svg width="16" height="13" viewBox="0 0 16 13"><circle cx="4" cy="2.5" r="1.8" fill="none" stroke="#1d4a70" stroke-width=".8"/><path d="M4 4.5V6Q1 6.5 3 8.5Q6 9 2 11H8" fill="none" stroke="#1d4a70" stroke-width=".8"/><circle cx="11" cy="7" r="2.8" fill="none" stroke="#1d4a70" stroke-width=".8"/><circle cx="11" cy="7" r="1" fill="none" stroke="#1d4a70" stroke-width=".7"/><path d="M8 12H14" stroke="#1d4a70" stroke-width=".8"/></svg><p>On-going</p></div>
<div class="ni" style="top:136px"><svg width="12" height="12" viewBox="0 0 12 12"><rect x="1" y="2" width="9" height="8.5" rx="1" fill="none" stroke="#1d4a70" stroke-width=".8"/><path d="M1 4.5H10M3.5 1V3M7.5 1V3" stroke="#1d4a70" stroke-width=".8"/><circle cx="9.5" cy="9.5" r="2" fill="#fff" stroke="#1d4a70" stroke-width=".7"/></svg><p>Schedule</p></div>
<div class="ni" style="top:184px"><svg width="12" height="12" viewBox="0 0 12 12"><path d="M2 4A4.5 4.5 0 1 1 1.5 7" fill="none" stroke="#1d4a70" stroke-width=".9"/><path d="M1 2.5L2 4.5L4 3.7M6 3.5V6.5L8 7.5" fill="none" stroke="#1d4a70" stroke-width=".8"/></svg><p>History</p></div>
<div class="ni" style="top:289px"><svg width="12" height="12" viewBox="0 0 12 12"><circle cx="6" cy="6" r="5" fill="none" stroke="#1d4a70" stroke-width=".8"/><path d="M4 10V7.5Q3.5 4 6 3.5Q8.5 4 8 7.5V10" fill="none" stroke="#1d4a70" stroke-width=".8"/></svg><p>Profile</p></div>
<div class="pn">
<div class="s w" style="top:37px"><i class="c k">✓</i><b class="t">PICK-UP</b><span class="u">Albert C. - Floristeria Berta</span></div>
<div class="s w" style="top:73px"><i class="c k">✓</i><b class="t">DROP-OFF</b><span class="u">Multiple drop-offs</span></div>
<div class="s bl" style="top:108px"><i class="c b">3</i><b class="t">SELECT TIME</b><span class="u">Add pick-up time</span></div>
<div class="s" style="top:144px"><i class="c">4</i><b class="t">CONTENT</b><span class="u">Add content details</span></div>
<div class="s" style="top:181px"><i class="c">5</i><b class="t">VEHICLE</b><span class="u">Select type of courier</span></div>
<div class="s" style="top:216px"><i class="c">6</i><b class="t">CONFIRM</b><span class="u">Review order for payment</span></div>
<div class="tot">0,00€</div><div class="ta">Total amount</div>
</div>
<svg class="ico" style="left:230px;top:44px" width="30" height="34" viewBox="0 0 30 34"><rect x="10" y="1" width="6" height="3" fill="none" stroke="#1d3b57"/><path d="M13 4V7M21 6L23 4" stroke="#1d3b57"/><circle cx="13" cy="18" r="11" fill="#f2bb3c" stroke="#1d3b57" stroke-width="1.2"/><path d="M13 12V19H17" fill="none" stroke="#1d3b57" stroke-width="1.2"/><circle cx="22" cy="26" r="6" fill="#f2bb3c" stroke="#1d3b57"/><path d="M19 24L22 22.5L25 24V28L22 29.5L19 28Z" fill="none" stroke="#1d3b57" stroke-width=".8"/></svg>
<div class="tt" style="top:84px">Select pick-up time</div>
<div class="btn" style="left:101px;top:166px;background:#29abe2">⚡ Immediate</div>
<div class="sm" style="left:240px;top:171px;font-size:4.5px">or</div>
<div class="btn" style="left:281px;top:166px;background:#0f3a5c">▦ Schedule</div>
<div class="ft"></div><div class="pv">Previous</div><div class="nx d">Next</div>
</div>

<!-- TIME 2 -->
<div class="ab" style="left:2003px;top:403px">
<div class="hd"><div class="logo"><svg width="14" height="14" viewBox="0 0 14 14"><path d="M7 1L12.5 4V10L7 13L1.5 10V4Z M1.5 4L7 7L12.5 4 M7 7V13" fill="none" stroke="#4aaee6" stroke-width="1.1"/></svg>stuart</div><div class="hi">Hi, Albert</div></div>
<div class="nv"></div>
<div class="rq"><svg width="11" height="11" viewBox="0 0 11 11"><circle cx="5.5" cy="5.5" r="4.8" fill="none" stroke="#fff" stroke-width=".8"/><path d="M5.5 3V8M3 5.5H8" stroke="#fff" stroke-width=".8"/></svg><p>Request</p></div>
<div class="ni" style="top:88px"><svg width="16" height="13" viewBox="0 0 16 13"><circle cx="4" cy="2.5" r="1.8" fill="none" stroke="#1d4a70" stroke-width=".8"/><path d="M4 4.5V6Q1 6.5 3 8.5Q6 9 2 11H8" fill="none" stroke="#1d4a70" stroke-width=".8"/><circle cx="11" cy="7" r="2.8" fill="none" stroke="#1d4a70" stroke-width=".8"/><circle cx="11" cy="7" r="1" fill="none" stroke="#1d4a70" stroke-width=".7"/><path d="M8 12H14" stroke="#1d4a70" stroke-width=".8"/></svg><p>On-going</p></div>
<div class="ni" style="top:136px"><svg width="12" height="12" viewBox="0 0 12 12"><rect x="1" y="2" width="9" height="8.5" rx="1" fill="none" stroke="#1d4a70" stroke-width=".8"/><path d="M1 4.5H10M3.5 1V3M7.5 1V3" stroke="#1d4a70" stroke-width=".8"/><circle cx="9.5" cy="9.5" r="2" fill="#fff" stroke="#1d4a70" stroke-width=".7"/></svg><p>Schedule</p></div>
<div class="ni" style="top:184px"><svg width="12" height="12" viewBox="0 0 12 12"><path d="M2 4A4.5 4.5 0 1 1 1.5 7" fill="none" stroke="#1d4a70" stroke-width=".9"/><path d="M1 2.5L2 4.5L4 3.7M6 3.5V6.5L8 7.5" fill="none" stroke="#1d4a70" stroke-width=".8"/></svg><p>History</p></div>
<div class="ni" style="top:289px"><svg width="12" height="12" viewBox="0 0 12 12"><circle cx="6" cy="6" r="5" fill="none" stroke="#1d4a70" stroke-width=".8"/><path d="M4 10V7.5Q3.5 4 6 3.5Q8.5 4 8 7.5V10" fill="none" stroke="#1d4a70" stroke-width=".8"/></svg><p>Profile</p></div>
<div class="pn">
<div class="s w" style="top:37px"><i class="c k">✓</i><b class="t">PICK-UP</b><span class="u">Albert C. - Floristeria Berta</span></div>
<div class="s w" style="top:73px"><i class="c k">✓</i><b class="t">DROP-OFF</b><span class="u">Multiple drop-offs</span></div>
<div class="s bl" style="top:108px"><i class="c b">3</i><b class="t">SELECT TIME</b><span class="u">Add pick-up time</span></div>
<div class="s" style="top:144px"><i class="c">4</i><b class="t">CONTENT</b><span class="u">Add content details</span></div>
<div class="s" style="top:181px"><i class="c">5</i><b class="t">VEHICLE</b><span class="u">Select type of courier</span></div>
<div class="s" style="top:216px"><i class="c">6</i><b class="t">CONFIRM</b><span class="u">Review order for payment</span></div>
<div class="tot">0,00€</div><div class="ta">Total amount</div>
</div>
<svg class="ico" style="left:230px;top:44px" width="30" height="34" viewBox="0 0 30 34"><rect x="10" y="1" width="6" height="3" fill="none" stroke="#1d3b57"/><path d="M13 4V7M21 6L23 4" stroke="#1d3b57"/><circle cx="13" cy="18" r="11" fill="#f2bb3c" stroke="#1d3b57" stroke-width="1.2"/><path d="M13 12V19H17" fill="none" stroke="#1d3b57" stroke-width="1.2"/><circle cx="22" cy="26" r="6" fill="#f2bb3c" stroke="#1d3b57"/><path d="M19 24L22 22.5L25 24V28L22 29.5L19 28Z" fill="none" stroke="#1d3b57" stroke-width=".8"/></svg>
<div class="tt" style="top:84px">Select pick-up time</div>
<div class="btn" style="left:101px;top:118px;background:#29abe2">⚡ Immediate</div>
<div class="sm" style="left:240px;top:123px;font-size:4.5px">or</div>
<div class="btn" style="left:281px;top:118px;background:#0f3a5c">▦ Schedule</div>
<div class="sm" style="left:119px;top:156px">Select Date</div>
<div class="cal" style="top:168px"><div style="position:absolute;left:15px;top:5px;font-size:3.5px">June 2019</div>
<table><tr class="h"><td>S</td><td>M</td><td>T</td><td>W</td><td>T</td><td>F</td><td>S</td></tr>
<tr><td class="o">27</td><td class="o">28</td><td class="o">29</td><td class="o">30</td><td>1</td><td>2</td><td>3</td></tr>
<tr><td>4</td><td>5</td><td>6</td><td>7</td><td>8</td><td>9</td><td>10</td></tr>
<tr><td>11</td><td>12</td><td>13</td><td>14</td><td>15</td><td>16</td><td>17</td></tr>
<tr><td>18</td><td>19</td><td>20</td><td>21</td><td>22</td><td>23</td><td>24</td></tr>
<tr><td>25</td><td>26</td><td>27</td><td>28</td><td>29</td><td>30</td><td>31</td></tr></table></div>
<div class="sm" style="left:296px;top:199px">Select Time</div>
<div class="sel2" style="left:296px;top:213px;width:29px"><span style="color:#29abe2;font-size:5px;margin:0 4px 0 3px">˅</span>14</div>
<div class="sm" style="left:329px;top:215px;font-size:7px">:</div>
<div class="sel2" style="left:336px;top:213px;width:33px;padding-left:4px">30<span style="color:#29abe2;font-size:5px;margin-left:7px">˅</span></div>
<div class="ft"></div><div class="pv">Previous</div><div class="nx">Next</div>
</div>

<!-- TIME 3 -->
<div class="ab" style="left:2003px;top:762px">
<div class="hd"><div class="logo"><svg width="14" height="14" viewBox="0 0 14 14"><path d="M7 1L12.5 4V10L7 13L1.5 10V4Z M1.5 4L7 7L12.5 4 M7 7V13" fill="none" stroke="#4aaee6" stroke-width="1.1"/></svg>stuart</div><div class="hi">Hi, Albert</div></div>
<div class="nv"></div>
<div class="rq"><svg width="11" height="11" viewBox="0 0 11 11"><circle cx="5.5" cy="5.5" r="4.8" fill="none" stroke="#fff" stroke-width=".8"/><path d="M5.5 3V8M3 5.5H8" stroke="#fff" stroke-width=".8"/></svg><p>Request</p></div>
<div class="ni" style="top:88px"><svg width="16" height="13" viewBox="0 0 16 13"><circle cx="4" cy="2.5" r="1.8" fill="none" stroke="#1d4a70" stroke-width=".8"/><path d="M4 4.5V6Q1 6.5 3 8.5Q6 9 2 11H8" fill="none" stroke="#1d4a70" stroke-width=".8"/><circle cx="11" cy="7" r="2.8" fill="none" stroke="#1d4a70" stroke-width=".8"/><circle cx="11" cy="7" r="1" fill="none" stroke="#1d4a70" stroke-width=".7"/><path d="M8 12H14" stroke="#1d4a70" stroke-width=".8"/></svg><p>On-going</p></div>
<div class="ni" style="top:136px"><svg width="12" height="12" viewBox="0 0 12 12"><rect x="1" y="2" width="9" height="8.5" rx="1" fill="none" stroke="#1d4a70" stroke-width=".8"/><path d="M1 4.5H10M3.5 1V3M7.5 1V3" stroke="#1d4a70" stroke-width=".8"/><circle cx="9.5" cy="9.5" r="2" fill="#fff" stroke="#1d4a70" stroke-width=".7"/></svg><p>Schedule</p></div>
<div class="ni" style="top:184px"><svg width="12" height="12" viewBox="0 0 12 12"><path d="M2 4A4.5 4.5 0 1 1 1.5 7" fill="none" stroke="#1d4a70" stroke-width=".9"/><path d="M1 2.5L2 4.5L4 3.7M6 3.5V6.5L8 7.5" fill="none" stroke="#1d4a70" stroke-width=".8"/></svg><p>History</p></div>
<div class="ni" style="top:289px"><svg width="12" height="12" viewBox="0 0 12 12"><circle cx="6" cy="6" r="5" fill="none" stroke="#1d4a70" stroke-width=".8"/><path d="M4 10V7.5Q3.5 4 6 3.5Q8.5 4 8 7.5V10" fill="none" stroke="#1d4a70" stroke-width=".8"/></svg><p>Profile</p></div>
<div class="pn">
<div class="s w" style="top:37px"><i class="c k">✓</i><b class="t">PICK-UP</b><span class="u">Albert C. - Floristeria Berta</span></div>
<div class="s w" style="top:73px"><i class="c k">✓</i><b class="t">DROP-OFF</b><span class="u">Multiple drop-offs</span></div>
<div class="s bl" style="top:108px"><i class="c b">3</i><b class="t">SELECT TIME</b><span class="u">Add pick-up time</span></div>
<div class="s" style="top:144px"><i class="c">4</i><b class="t">CONTENT</b><span class="u">Add content details</span></div>
<div class="s" style="top:181px"><i class="c">5</i><b class="t">VEHICLE</b><span class="u">Select type of courier</span></div>
<div class="s" style="top:216px"><i class="c">6</i><b class="t">CONFIRM</b><span class="u">Review order for payment</span></div>
<div class="tot">0,00€</div><div class="ta">Total amount</div>
</div>
<svg class="ico" style="left:230px;top:44px" width="30" height="34" viewBox="0 0 30 34"><rect x="10" y="1" width="6" height="3" fill="none" stroke="#1d3b57"/><path d="M13 4V7M21 6L23 4" stroke="#1d3b57"/><circle cx="13" cy="18" r="11" fill="#f2bb3c" stroke="#1d3b57" stroke-width="1.2"/><path d="M13 12V19H17" fill="none" stroke="#1d3b57" stroke-width="1.2"/><circle cx="22" cy="26" r="6" fill="#f2bb3c" stroke="#1d3b57"/><path d="M19 24L22 22.5L25 24V28L22 29.5L19 28Z" fill="none" stroke="#1d3b57" stroke-width=".8"/></svg>
<div class="tt" style="top:84px">Select pick-up time</div>
<div class="btn" style="left:101px;top:118px;background:#29abe2">⚡ Immediate</div>
<div class="sm" style="left:240px;top:123px;font-size:4.5px">or</div>
<div class="btn" style="left:281px;top:118px;background:#0f3a5c">▦ Schedule</div>
<div class="sm" style="left:119px;top:156px">Select Date</div>
<div class="cal" style="top:168px"><div style="position:absolute;left:15px;top:5px;font-size:3.5px">June 2019</div>
<table><tr class="h"><td>S</td><td>M</td><td>T</td><td>W</td><td>T</td><td>F</td><td>S</td></tr>
<tr><td class="o">27</td><td class="o">28</td><td class="o">29</td><td class="o">30</td><td>1</td><td>2</td><td>3</td></tr>
<tr><td>4</td><td>5</td><td class="sel"><span>6</span></td><td>7</td><td>8</td><td>9</td><td>10</td></tr>
<tr><td>11</td><td>12</td><td>13</td><td>14</td><td>15</td><td>16</td><td>17</td></tr>
<tr><td>18</td><td>19</td><td>20</td><td>21</td><td>22</td><td>23</td><td>24</td></tr>
<tr><td>25</td><td>26</td><td>27</td><td>28</td><td>29</td><td>30</td><td>31</td></tr></table></div>
<div class="sm" style="left:296px;top:199px">Select Time</div>
<div class="sel2" style="left:296px;top:213px;width:29px"><span style="color:#29abe2;font-size:5px;margin:0 4px 0 3px">˅</span>14</div>
<div class="sm" style="left:329px;top:215px;font-size:7px">:</div>
<div class="sel2" style="left:336px;top:213px;width:33px;padding-left:4px">30<span style="color:#29abe2;font-size:5px;margin-left:7px">˅</span></div>
<div class="ft"></div><div class="pv">Previous</div><div class="nx">Next</div>
</div>

<!-- CONTENT 1 -->
<div class="ab" style="left:2617px;top:44px">
<div class="hd"><div class="logo"><svg width="14" height="14" viewBox="0 0 14 14"><path d="M7 1L12.5 4V10L7 13L1.5 10V4Z M1.5 4L7 7L12.5 4 M7 7V13" fill="none" stroke="#4aaee6" stroke-width="1.1"/></svg>stuart</div><div class="hi">Hi, Albert</div></div>
<div class="nv"></div>
<div class="rq"><svg width="11" height="11" viewBox="0 0 11 11"><circle cx="5.5" cy="5.5" r="4.8" fill="none" stroke="#fff" stroke-width=".8"/><path d="M5.5 3V8M3 5.5H8" stroke="#fff" stroke-width=".8"/></svg><p>Request</p></div>
<div class="ni" style="top:88px"><svg width="16" height="13" viewBox="0 0 16 13"><circle cx="4" cy="2.5" r="1.8" fill="none" stroke="#1d4a70" stroke-width=".8"/><path d="M4 4.5V6Q1 6.5 3 8.5Q6 9 2 11H8" fill="none" stroke="#1d4a70" stroke-width=".8"/><circle cx="11" cy="7" r="2.8" fill="none" stroke="#1d4a70" stroke-width=".8"/><circle cx="11" cy="7" r="1" fill="none" stroke="#1d4a70" stroke-width=".7"/><path d="M8 12H14" stroke="#1d4a70" stroke-width=".8"/></svg><p>On-going</p></div>
<div class="ni" style="top:136px"><svg width="12" height="12" viewBox="0 0 12 12"><rect x="1" y="2" width="9" height="8.5" rx="1" fill="none" stroke="#1d4a70" stroke-width=".8"/><path d="M1 4.5H10M3.5 1V3M7.5 1V3" stroke="#1d4a70" stroke-width=".8"/><circle cx="9.5" cy="9.5" r="2" fill="#fff" stroke="#1d4a70" stroke-width=".7"/></svg><p>Schedule</p></div>
<div class="ni" style="top:184px"><svg width="12" height="12" viewBox="0 0 12 12"><path d="M2 4A4.5 4.5 0 1 1 1.5 7" fill="none" stroke="#1d4a70" stroke-width=".9"/><path d="M1 2.5L2 4.5L4 3.7M6 3.5V6.5L8 7.5" fill="none" stroke="#1d4a70" stroke-width=".8"/></svg><p>History</p></div>
<div class="ni" style="top:289px"><svg width="12" height="12" viewBox="0 0 12 12"><circle cx="6" cy="6" r="5" fill="none" stroke="#1d4a70" stroke-width=".8"/><path d="M4 10V7.5Q3.5 4 6 3.5Q8.5 4 8 7.5V10" fill="none" stroke="#1d4a70" stroke-width=".8"/></svg><p>Profile</p></div>
<div class="pn">
<div class="s w" style="top:37px"><i class="c k">✓</i><b class="t">PICK-UP</b><span class="u">Albert C. - Floristeria Berta</span></div>
<div class="s w" style="top:73px"><i class="c k">✓</i><b class="t">DROP-OFF</b><span class="u">Multiple drop-offs</span></div>
<div class="s w" style="top:108px"><i class="c k">✓</i><b class="t">SELECT TIME</b><span class="u">June 6th - 14:30</span></div>
<div class="s bl" style="top:144px"><i class="c b">4</i><b class="t">CONTENT</b><span class="u">Add content details</span></div>
<div class="s" style="top:181px"><i class="c">5</i><b class="t">VEHICLE</b><span class="u">Select type of courier</span></div>
<div class="s" style="top:216px"><i class="c">6</i><b class="t">CONFIRM</b><span class="u">Review order for payment</span></div>
<div class="tot">0,00€</div><div class="ta">Total amount</div>
</div>
<svg class="ico" style="left:227px;top:43px" width="34" height="36" viewBox="0 0 34 36"><path d="M5 16L16 11L27 16L16 21Z" fill="#e5a318" stroke="#1d3b57"/><path d="M5 16L16 21V34L5 29Z" fill="#f2bb3c" stroke="#1d3b57"/><path d="M16 21L27 16V29L16 34Z" fill="#f5c542" stroke="#1d3b57"/><path d="M10 13V6M22 13V4H26" fill="none" stroke="#1d3b57" stroke-width=".8"/><circle cx="9" cy="8" r="4" fill="#f2bb3c" stroke="#1d3b57" stroke-width=".8"/><circle cx="28" cy="5" r="4" fill="#f2bb3c" stroke="#1d3b57" stroke-width=".8"/></svg>
<div class="tt" style="top:84px">Add content details</div>
<div class="sm" style="left:85px;top:119px">Size of Parcel</div>
<div class="pi" style="left:85px;top:135px"><svg width="14" height="12" viewBox="0 0 14 12"><rect x="1" y="2" width="12" height="8" fill="none" stroke="#29abe2" stroke-width=".8"/><path d="M1 2L7 7L13 2M1 10L5.5 6M13 10L8.5 6" fill="none" stroke="#29abe2" stroke-width=".7"/></svg><b>XS</b><i>22.5 x 14.5 x 3.5cm</i></div>
<div class="pi" style="left:150px;top:135px"><svg width="14" height="13" viewBox="0 0 14 13"><path d="M2 4L7 1.5L12 4V10L7 12.5L2 10Z M2 4L7 6.5L12 4M7 6.5V12.5" fill="none" stroke="#29abe2" stroke-width=".8"/></svg><b>S</b><i>25 x 17.5 x 10cm</i></div>
<div class="pi" style="left:215px;top:133px"><svg width="12" height="15" viewBox="0 0 12 15"><rect x="1.5" y="2" width="9" height="12" rx="2" fill="none" stroke="#29abe2" stroke-width=".8"/><path d="M4 2V1H8V2M1.5 6H10.5M3.5 8H8.5V11H3.5Z" fill="none" stroke="#29abe2" stroke-width=".7"/></svg><b>M</b><i>37.5 x 30 x 13.5cm</i></div>
<div class="pi" style="left:277px;top:131px"><svg width="10" height="17" viewBox="0 0 10 17"><rect x="1" y="4" width="8" height="11" rx="1.5" fill="none" stroke="#29abe2" stroke-width=".8"/><path d="M3.5 4V1H6.5V4M3.5 6V13M5 6V13M6.5 6V13M2.5 15V16.5M7.5 15V16.5" fill="none" stroke="#29abe2" stroke-width=".6"/></svg><b>L</b><i>45 x 35 x 20cm</i></div>
<div class="pi" style="left:341px;top:134px"><svg width="14" height="13" viewBox="0 0 14 13"><path d="M2 5L5 2L7 5L11 2H13V6H6M4 9A2 2 0 1 0 4 9.1M1 12H13" fill="none" stroke="#29abe2" stroke-width=".8"/></svg><b>XL</b><i>53 x 53 x 41cm</i></div>
<div class="sm" style="left:85px;top:194px">Content Details</div>
<div class="f" style="left:85px;top:209px;width:303px;height:46px"><em>Additional details</em><span style="font-size:5px;color:#666;top:5px">Ex: weight, temperature, fragility, etc.</span></div>
<div class="ft"></div><div class="pv">Previous</div><div class="nx">Next</div>
</div>

<!-- CONTENT 2 -->
<div class="ab" style="left:2606px;top:403px">
<div class="hd"><div class="logo"><svg width="14" height="14" viewBox="0 0 14 14"><path d="M7 1L12.5 4V10L7 13L1.5 10V4Z M1.5 4L7 7L12.5 4 M7 7V13" fill="none" stroke="#4aaee6" stroke-width="1.1"/></svg>stuart</div><div class="hi">Hi, Albert</div></div>
<div class="nv"></div>
<div class="rq"><svg width="11" height="11" viewBox="0 0 11 11"><circle cx="5.5" cy="5.5" r="4.8" fill="none" stroke="#fff" stroke-width=".8"/><path d="M5.5 3V8M3 5.5H8" stroke="#fff" stroke-width=".8"/></svg><p>Request</p></div>
<div class="ni" style="top:88px"><svg width="16" height="13" viewBox="0 0 16 13"><circle cx="4" cy="2.5" r="1.8" fill="none" stroke="#1d4a70" stroke-width=".8"/><path d="M4 4.5V6Q1 6.5 3 8.5Q6 9 2 11H8" fill="none" stroke="#1d4a70" stroke-width=".8"/><circle cx="11" cy="7" r="2.8" fill="none" stroke="#1d4a70" stroke-width=".8"/><circle cx="11" cy="7" r="1" fill="none" stroke="#1d4a70" stroke-width=".7"/><path d="M8 12H14" stroke="#1d4a70" stroke-width=".8"/></svg><p>On-going</p></div>
<div class="ni" style="top:136px"><svg width="12" height="12" viewBox="0 0 12 12"><rect x="1" y="2" width="9" height="8.5" rx="1" fill="none" stroke="#1d4a70" stroke-width=".8"/><path d="M1 4.5H10M3.5 1V3M7.5 1V3" stroke="#1d4a70" stroke-width=".8"/><circle cx="9.5" cy="9.5" r="2" fill="#fff" stroke="#1d4a70" stroke-width=".7"/></svg><p>Schedule</p></div>
<div class="ni" style="top:184px"><svg width="12" height="12" viewBox="0 0 12 12"><path d="M2 4A4.5 4.5 0 1 1 1.5 7" fill="none" stroke="#1d4a70" stroke-width=".9"/><path d="M1 2.5L2 4.5L4 3.7M6 3.5V6.5L8 7.5" fill="none" stroke="#1d4a70" stroke-width=".8"/></svg><p>History</p></div>
<div class="ni" style="top:289px"><svg width="12" height="12" viewBox="0 0 12 12"><circle cx="6" cy="6" r="5" fill="none" stroke="#1d4a70" stroke-width=".8"/><path d="M4 10V7.5Q3.5 4 6 3.5Q8.5 4 8 7.5V10" fill="none" stroke="#1d4a70" stroke-width=".8"/></svg><p>Profile</p></div>
<div class="pn">
<div class="s w" style="top:37px"><i class="c k">✓</i><b class="t">PICK-UP</b><span class="u">Albert C. - Floristeria Berta</span></div>
<div class="s w" style="top:73px"><i class="c k">✓</i><b class="t">DROP-OFF</b><span class="u">Multiple drop-offs</span></div>
<div class="s w" style="top:108px"><i class="c k">✓</i><b class="t">SELECT TIME</b><span class="u">June 6th - 14:30</span></div>
<div class="s bl" style="top:144px"><i class="c b">4</i><b class="t">CONTENT</b><span class="u">Add content details</span></div>
<div class="s" style="top:181px"><i class="c">5</i><b class="t">VEHICLE</b><span class="u">Select type of courier</span></div>
<div class="s" style="top:216px"><i class="c">6</i><b class="t">CONFIRM</b><span class="u">Review order for payment</span></div>
<div class="tot">0,00€</div><div class="ta">Total amount</div>
</div>
<svg class="ico" style="left:227px;top:43px" width="34" height="36" viewBox="0 0 34 36"><path d="M5 16L16 11L27 16L16 21Z" fill="#e5a318" stroke="#1d3b57"/><path d="M5 16L16 21V34L5 29Z" fill="#f2bb3c" stroke="#1d3b57"/><path d="M16 21L27 16V29L16 34Z" fill="#f5c542" stroke="#1d3b57"/><path d="M10 13V6M22 13V4H26" fill="none" stroke="#1d3b57" stroke-width=".8"/><circle cx="9" cy="8" r="4" fill="#f2bb3c" stroke="#1d3b57" stroke-width=".8"/><circle cx="28" cy="5" r="4" fill="#f2bb3c" stroke="#1d3b57" stroke-width=".8"/></svg>
<div class="tt" style="top:84px">Add content details</div>
<div class="sm" style="left:85px;top:119px">Size of Parcel</div>
<div style="position:absolute;left:208px;top:125px;width:61px;height:55px;background:#fff;box-shadow:0 0 4px rgba(0,0,0,.15);border-radius:2px"></div>
<div class="pi" style="left:85px;top:135px"><svg width="14" height="12" viewBox="0 0 14 12"><rect x="1" y="2" width="12" height="8" fill="none" stroke="#29abe2" stroke-width=".8"/><path d="M1 2L7 7L13 2M1 10L5.5 6M13 10L8.5 6" fill="none" stroke="#29abe2" stroke-width=".7"/></svg><b>XS</b><i>22.5 x 14.5 x 3.5cm</i></div>
<div class="pi" style="left:150px;top:135px"><svg width="14" height="13" viewBox="0 0 14 13"><path d="M2 4L7 1.5L12 4V10L7 12.5L2 10Z M2 4L7 6.5L12 4M7 6.5V12.5" fill="none" stroke="#29abe2" stroke-width=".8"/></svg><b>S</b><i>25 x 17.5 x 10cm</i></div>
<div class="pi" style="left:214px;top:133px"><svg width="12" height="15" viewBox="0 0 12 15"><rect x="1.5" y="2" width="9" height="12" rx="2" fill="none" stroke="#29abe2" stroke-width=".8"/><path d="M4 2V1H8V2M1.5 6H10.5M3.5 8H8.5V11H3.5Z" fill="none" stroke="#29abe2" stroke-width=".7"/></svg><b>M</b><i>37.5 x 30 x 13.5cm</i></div>
<div class="pi" style="left:277px;top:131px"><svg width="10" height="17" viewBox="0 0 10 17"><rect x="1" y="4" width="8" height="11" rx="1.5" fill="none" stroke="#29abe2" stroke-width=".8"/><path d="M3.5 4V1H6.5V4M3.5 6V13M5 6V13M6.5 6V13M2.5 15V16.5M7.5 15V16.5" fill="none" stroke="#29abe2" stroke-width=".6"/></svg><b>L</b><i>45 x 35 x 20cm</i></div>
<div class="pi" style="left:341px;top:134px"><svg width="14" height="13" viewBox="0 0 14 13"><path d="M2 5L5 2L7 5L11 2H13V6H6M4 9A2 2 0 1 0 4 9.1M1 12H13" fill="none" stroke="#29abe2" stroke-width=".8"/></svg><b>XL</b><i>53 x 53 x 41cm</i></div>
<div class="sm" style="left:85px;top:194px">Content Details</div>
<div class="f" style="left:85px;top:209px;width:303px;height:46px"><em>Additional details</em><span style="font-size:5px;color:#666;top:5px">Ex: weight, temperature, fragility, etc.</span></div>
<div class="ft"></div><div class="pv">Previous</div><div class="nx">Next</div>
</div>

</body></html>
